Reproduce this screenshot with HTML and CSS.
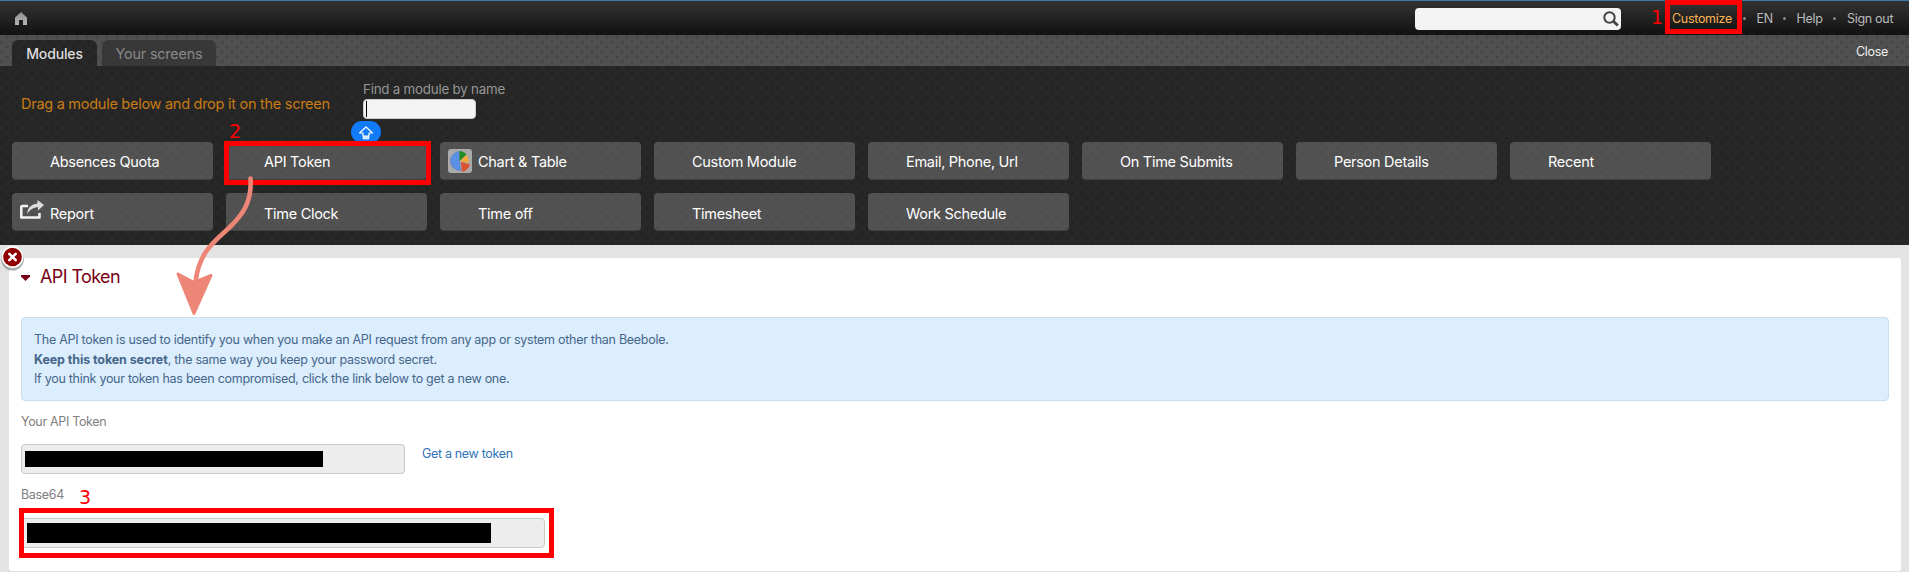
FILE: index.html
```html
<!DOCTYPE html>
<html lang="en">
<head>
<meta charset="utf-8">
<title>API Token</title>
<link rel="stylesheet" href="styles.css">
</head>
<body>
<header class="topbar">
  <svg class="home" width="12" height="13" viewBox="0 0 12 13"><defs><linearGradient id="hg" x1="0" y1="0" x2="0" y2="1"><stop offset="0" stop-color="#8f8f8f"/><stop offset="1" stop-color="#b5b5b5"/></linearGradient></defs><path fill="url(#hg)" d="M6 0 12 5.5V13H8V8H4V13H0V5.500Z"/></svg>
  <div class="search"><svg width="16" height="16" viewBox="0 0 16 16" fill="none" stroke="#444"><circle cx="6.500" cy="6.500" r="5.200" stroke-width="2"/><path stroke-width="2.800" d="m10.300 10.300 4.500 4.200"/></svg></div>
  <nav class="links">
    <a class="customize">Customize</a><i></i><a class="lang">EN</a><i></i><a class="help">Help</a><i></i><a class="signout">Sign out</a>
  </nav>
</header>
<div class="tabbar dots">
  <div class="tab active dots">Modules</div>
  <div class="tab">Your screens</div>
  <a class="close">Close</a>
</div>
<section class="panel dots">
  <div class="finder">
    <p class="drag">Drag a module below and drop it on the screen</p>
    <div class="find"><label>Find a module by name</label><div class="find-input"><span class="caret"></span></div></div>
  </div>
  <div class="modules">
    <div class="module"><span>Absences Quota</span></div>
    <div class="module"><span>API Token</span></div>
    <div class="module"><svg class="chart" width="24" height="24" viewBox="0 0 24 24"><rect width="24" height="24" rx="3" fill="#aaa"/><path fill="#5c8fe6" stroke="#4775bd" stroke-width=".5" d="M11.500 2.500a9.500 9.500 0 1 0 1 19L11.500 12Z"/><path fill="#228b22" d="M11.500 2q4 0 7 3.600L11.500 12Z"/><path fill="#f6a83c" d="M18.500 6q3 4 2.300 8L12 12Z"/><path fill="#dc5230" d="m13 13 9 2.500q-2 6-8 7.500Z"/></svg><span>Chart &amp; Table</span></div>
    <div class="module"><span>Custom Module</span></div>
    <div class="module"><span>Email, Phone, Url</span></div>
    <div class="module"><span>On Time Submits</span></div>
    <div class="module"><span>Person Details</span></div>
    <div class="module"><span>Recent</span></div>
    <div class="module low"><svg class="report" width="24" height="20" viewBox="0 0 24 20"><path fill="none" stroke="#f4f4f4" stroke-width="2.500" stroke-linejoin="round" d="M8 6H2.500Q1.300 6 1.300 7.500V17.500H19.500V13"/><path fill="#ddd" d="M7 14Q8 4.500 17.500 3.500V0L24 5l-6 5.500V7Q11 7.500 7 14Z"/></svg><span>Report</span></div>
    <div class="module low"><span>Time Clock</span></div>
    <div class="module low"><span>Time off</span></div>
    <div class="module low"><span>Timesheet</span></div>
    <div class="module low"><span>Work Schedule</span></div>
  </div>
</section>
<main class="card">
  <h1><svg width="9" height="6" viewBox="0 0 9 6"><path fill="#780014" d="M0 0H9V1.500L4.500 6 0 1.500Z"/></svg><span>API Token</span></h1>
  <div class="alert">
    <p>The API token is used to identify you when you make an API request from any app or system other than Beebole.</p>
    <p><b>Keep this token secret</b>, the same way you keep your password secret.</p>
    <p>If you think your token has been compromised, click the link below to get a new one.</p>
  </div>
  <label class="label">Your API Token</label>
  <div class="row"><div class="field"><span class="redact"></span></div><a class="newtoken">Get a new token</a></div>
  <label class="label second">Base64</label>
  <div class="field wide"><span class="redact"></span></div>
</main>
<svg class="shift" width="30" height="21" viewBox="0 0 30 21"><rect width="30" height="22" rx="11" fill="#117bf9"/><path fill="#117bf9" stroke="#fff" stroke-width="1.200" stroke-linejoin="round" d="m15 6 6.500 6H18v3h-6v-3H8.500Z"/><path fill="#cfe4ff" stroke="#fff" stroke-width=".6" d="M12 15.500h6V18h-6z"/></svg>
<svg class="remove" width="26" height="28" viewBox="0 0 26 28"><circle cx="12.500" cy="14" r="11.500" fill="#777" opacity=".6"/><circle cx="12.500" cy="12" r="11" fill="#fff"/><circle cx="12.500" cy="12" r="9.300" fill="#900000"/><path stroke="#fff" stroke-width="2.600" stroke-linecap="round" d="m9.300 8.800 6.400 6.400m0-6.400-6.400 6.400"/></svg>
<div class="box box1"></div><div class="box box2"></div><div class="box box3"></div>
<span class="num n1">1</span><span class="num n2">2</span><span class="num n3">3</span>
<svg class="arrow" width="100" height="160" viewBox="0 0 100 160"><path fill="none" stroke="#ed8677" stroke-width="4.600" stroke-linecap="round" d="M80.500 18.500C82 42 73 54 60 67C46 80 29 91 25.500 122"/><path fill="#ed8677" stroke="#ed8677" stroke-width="3" stroke-linejoin="round" d="M8 114 24 122.500 41 115.500 24 153.500Z"/></svg>
</body>
</html>
```
FILE: styles.css
```css
* { box-sizing: border-box; }
html, body { height: 572px; overflow: hidden; }
body { margin: 0; background: #e3e3e3; font-family: Inter, "Liberation Sans", sans-serif; position: relative; }
p, h1 { margin: 0; }
span, a, label { white-space: nowrap; }
.topbar { height: 35px; border-top: 1px solid #387aae; background: linear-gradient(#333, #111); display: flex; align-items: flex-start; }
.home { margin: 11px 0 0 15px; }
.search { margin: 7px 0 0 1388px; width: 206px; height: 22px; border-radius: 4px; background: #f4f4f4; display: flex; justify-content: flex-end; padding: 3px 2px 0 0; }
.links { margin-left: 51px; display: flex; align-items: center; height: 34px; font-size: 12.5px; letter-spacing: -.3px; color: #bbb; }
.links i { width: 3px; height: 3px; border-radius: 50%; background: #888; margin: 0 11px 0 10.500px; }
.customize { color: #fab450; width: 60px; }
.lang { width: 15.500px; } .help { width: 26px; }
.tabbar { height: 31px; background-color: #505050; display: flex; align-items: flex-end; padding-left: 12px; gap: 5px; --dot: #464646; }
.dots { background-image: radial-gradient(circle at 2px 2px, var(--dot) 1.2px, transparent 2px), radial-gradient(circle at 7px 7px, var(--dot) 1.2px, transparent 2px); background-size: 10px 10px; background-position: 0 5px; }
.tab { width: 114px; height: 26px; border-radius: 6px 6px 0 0; background-color: #383838; color: #898989; font-size: 14.3px; letter-spacing: -.15px; line-height: 28px; text-align: center; }
.tab.active { width: 85px; background-color: #272727; --dot: #222; color: #dedede; font-weight: 500; font-size: 14px; }
.close { margin-left: auto; padding-right: 21px; height: 31px; line-height: 33px; font-size: 12.5px; letter-spacing: -.3px; color: #eee; }
.panel { height: 179px; background-color: #272727; --dot: #222; padding: 14px 0 0 12px; }
.finder { display: flex; height: 62px; padding-left: 9px; }
.drag { width: 342px; color: #c97c14; font-size: 14.5px; letter-spacing: -.27px; line-height: 18px; padding-top: 15px; }
.find label { display: block; color: #969696; font-size: 13.3px; letter-spacing: -.2px; line-height: 18px; height: 19px; }
.find-input { width: 113px; height: 20px; background: #f4f4f4; border: 1px solid #ccc; border-radius: 4px; padding: 1px 2px; }
.caret { display: block; width: 1px; height: 16px; background: #000; }
.modules { display: grid; grid-template-columns: repeat(8, 201px); grid-auto-rows: 38px; gap: 13px; }
.module { display: flex; align-items: center; background: rgba(255,255,255,.2); border-bottom: 1px solid #414141; border-radius: 4px; padding: 1px 0 0 38px; color: #fff; font-size: 14.5px; letter-spacing: -.29px; }
.module.low { padding-top: 3px; }
.chart { margin: -1px 6px 0 -30px; }
.report { margin: -7px 6px 0 -30px; }
.card { margin: 13px 8px 0 9px; height: 313px; background: #fff; border-radius: 3px; padding: 0 12px; }
h1 { display: flex; align-items: center; gap: 10px; height: 59px; padding-bottom: 22px; color: #780014; font-size: 18px; letter-spacing: -.6px; font-weight: 400; }
h1 svg { margin-top: 2px; }
.alert { height: 84px; width: 1868px; border: 1px solid #c9dff1; border-radius: 4px; background: #dcedfd; padding: 12px; font-size: 12.5px; letter-spacing: -.275px; line-height: 19.5px; color: #45678b; }
.alert b { letter-spacing: -.1px; }
.label { display: block; height: 43px; padding-top: 11px; line-height: 20px; color: #808080; font-size: 12.5px; letter-spacing: -.33px; }
.row { display: flex; height: 30px; gap: 17px; }
.field { width: 384px; height: 30px; border: 1px solid #c9c9c9; border-radius: 4px; background: #ededed; padding: 6px 3px; }
.redact { display: block; width: 298px; height: 16px; background: #000; }
.newtoken { color: #2f73b7; font-size: 12.5px; letter-spacing: -.33px; line-height: 20px; }
.label.second { height: 44px; }
.wide { width: 524px; padding: 4px 5px; }
.wide .redact { width: 464px; height: 20px; }
.shift, .remove, .box, .num, .arrow { position: absolute; }
.shift { left: 351px; top: 121px; }
.remove { left: 0; top: 245px; }
.box { border: 5px solid #f00; }
.box1 { left: 1665px; top: 0; width: 77px; height: 34px; }
.box2 { left: 224px; top: 141px; width: 207px; height: 44px; }
.box3 { left: 19px; top: 508px; width: 535px; height: 50px; }
.num { color: #f00; font: 19px/20px "DejaVu Sans", sans-serif; }
.n1 { left: 1651px; top: 7px; } .n2 { left: 229px; top: 121px; } .n3 { left: 79px; top: 487px; }
.arrow { left: 170px; top: 160px; }
```
